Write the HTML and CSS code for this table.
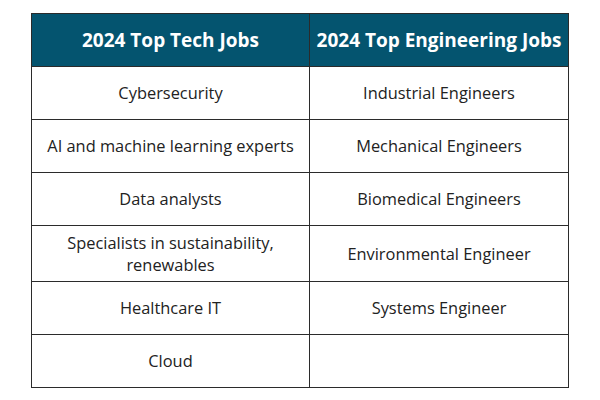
FILE: index.html
```html
<!DOCTYPE html>
<html lang="en">
<head>
  <meta charset="UTF-8">
  <title>2024 Top Jobs</title>
  <link rel="stylesheet" href="styles.css">
</head>
<body>

<table class="jobs">
  <colgroup>
    <col class="col-tech">
    <col class="col-eng">
  </colgroup>
  <tr>
    <th>2024 Top Tech Jobs</th>
    <th>2024 Top Engineering Jobs</th>
  </tr>
  <tr>
    <td>Cybersecurity</td>
    <td>Industrial Engineers</td>
  </tr>
  <tr>
    <td>AI and machine learning experts</td>
    <td>Mechanical Engineers</td>
  </tr>
  <tr>
    <td>Data analysts</td>
    <td>Biomedical Engineers</td>
  </tr>
  <tr class="tall">
    <td>Specialists in sustainability,<br>renewables</td>
    <td>Environmental Engineer</td>
  </tr>
  <tr>
    <td>Healthcare IT</td>
    <td>Systems Engineer</td>
  </tr>
  <tr>
    <td>Cloud</td>
    <td></td>
  </tr>
</table>

</body>
</html>
```

FILE: styles.css
```css
body {
  margin: 0;
  padding: 13px 0 0 31px;
  background: #fff;
  font-family: "Open Sans", sans-serif;
  color: #222;
}
.jobs {
  border-collapse: collapse;
  table-layout: fixed;
  width: 537px;
}
.col-tech { width: 278px; }
.col-eng { width: 259px; }
.jobs th, .jobs td {
  border: 1px solid #2b2b2b;
  text-align: center;
  vertical-align: middle;
  padding: 0 4px;
  height: 52px;
}
.jobs th {
  background: #04546f;
  color: #fff;
  font-weight: 700;
  font-size: 19px;
}
.jobs td {
  font-size: 16.4px;
  line-height: 22px;
}
.jobs .tall td { height: 55px; }
```
